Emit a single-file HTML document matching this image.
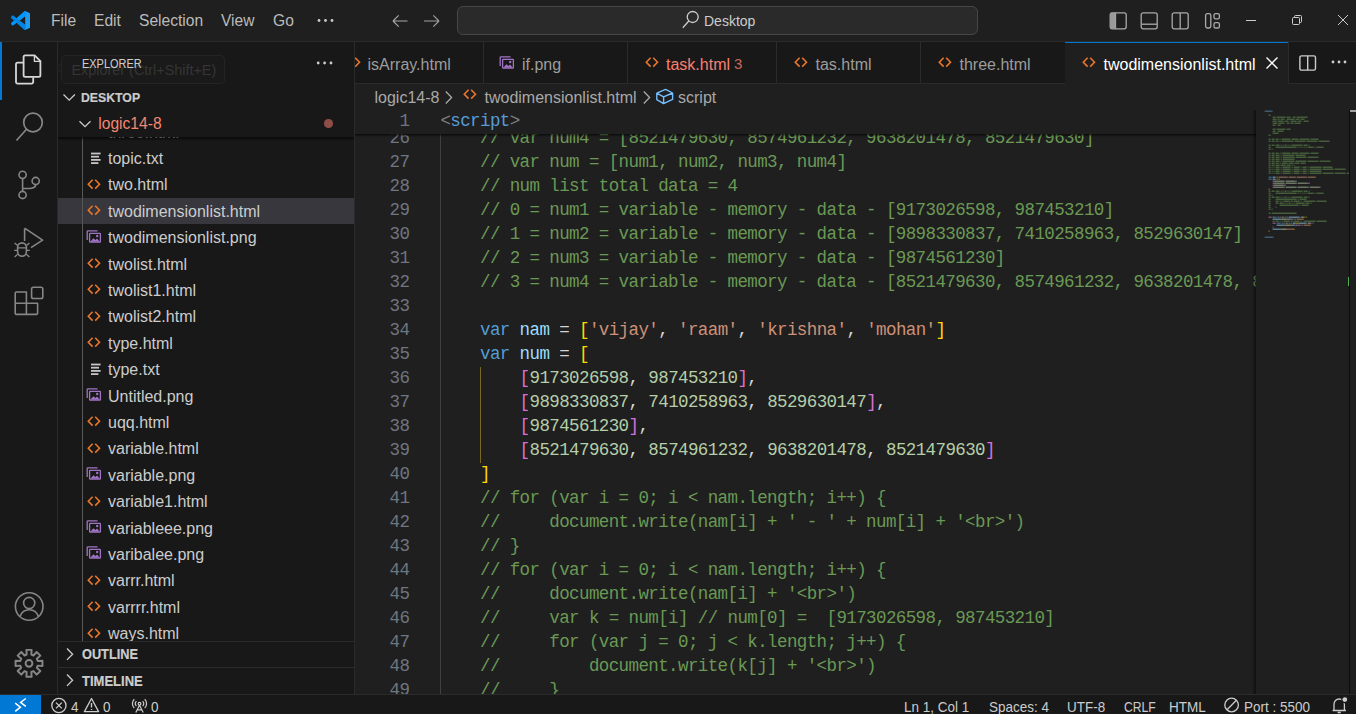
<!DOCTYPE html>
<html><head><meta charset="utf-8">
<style>
*{box-sizing:border-box}
html,body{margin:0;padding:0}
body{width:1356px;height:714px;overflow:hidden;position:relative;background:#1f1f1f;font-family:"Liberation Sans",sans-serif;color:#cccccc}
.a{position:absolute}
.t{position:absolute;white-space:pre;line-height:1}
svg{position:absolute;overflow:visible}
/* code */
.ln{position:absolute;left:0;width:54.4px;text-align:right;font-family:"Liberation Mono",monospace;font-size:17.5px;letter-spacing:-0.6016px;line-height:24px;margin-top:-0.6px;color:#6e7681;white-space:pre}
.cl{position:absolute;left:85.4px;margin-top:-0.6px;font-family:"Liberation Mono",monospace;font-size:17.5px;letter-spacing:-0.6016px;line-height:24px;color:#d4d4d4;white-space:pre}
.c{color:#6a9955}.k{color:#569cd6}.v{color:#9cdcfe}.s{color:#ce9178}.n{color:#b5cea8}.g{color:#ffd700}.o{color:#da70d6}.p{color:#808080}
.fi{position:absolute;left:108px;font-size:16px;line-height:1;white-space:pre;color:#cccccc}
</style></head>
<body>
<!-- title bar -->
<div class="a" style="left:0;top:0;width:1356px;height:41px;background:#1f1f1f"></div>
<div class="a" style="left:0;top:41px;width:1356px;height:1px;background:#2b2b2b"></div>
<!-- title content -->
<svg style="left:11px;top:11px" width="19" height="19" viewBox="0 0 100 100"><path fill="#0065a9" d="M96.46 10.8L75.86.87C73.47-.28 70.62.2 68.75 2.08L29.35 38.04 12.19 25.01c-1.6-1.21-3.83-1.11-5.32.24L1.36 30.26c-1.82 1.65-1.82 4.51 0 6.16L16.25 50 1.36 63.58c-1.82 1.65-1.82 4.51 0 6.16l5.51 5.01c1.49 1.35 3.72 1.45 5.32.24l17.16-13.03 39.4 35.96c1.87 1.87 4.72 2.36 7.11 1.21l20.6-9.91c2.16-1.04 3.54-3.23 3.54-5.63V16.41c0-2.4-1.38-4.59-3.54-5.63zM75.02 72.7L45.11 50l29.91-22.7v45.4z"/><path fill="#007acc" d="M96.46 10.8L75.86.87C73.47-.28 70.62.2 68.75 2.08L29.35 38.04 12.19 25.01c-1.6-1.21-3.83-1.11-5.32.24L1.36 30.26c-1.82 1.65-1.82 4.51 0 6.16L16.25 50 1.36 63.58c-1.82 1.65-1.82 4.51 0 6.16l5.51 5.01c1.49 1.35 3.72 1.45 5.32.24l17.16-13.03 39.4 35.96L75.02 72.7 45.11 50l29.91-22.7V0" opacity="0"/><path fill="#1f9cf0" d="M68.75 2.08c1.87-1.87 4.72-2.36 7.11-1.21l20.6 9.91c2.16 1.04 3.54 3.23 3.54 5.63v67.18c0 2.4-1.38 4.59-3.54 5.63l-20.6 9.91c-2.39 1.15-5.24.66-7.11-1.21 2.31 2.31 6.27.67 6.27-2.59V4.67c0-3.26-3.96-4.9-6.27-2.59z"/><path fill="#0098ff" d="M12.19 74.99c-1.6 1.21-3.83 1.11-5.32-.24l-5.51-5.01c-1.82-1.65-1.82-4.51 0-6.16L68.75 2.08c2.31-2.31 6.27-.67 6.27 2.59v22.63L12.19 74.99z"/><path fill="#0087e6" d="M12.19 25.01c-1.6-1.21-3.83-1.11-5.32.24l-5.51 5.01c-1.82 1.65-1.82 4.51 0 6.16l67.39 61.5c2.31 2.31 6.27.67 6.27-2.59V72.7L12.19 25.01z"/></svg>
<div class="t" style="left:51px;top:13.1px;font-size:15.6px;color:#bbbbbb">File</div>
<div class="t" style="left:94px;top:13.1px;font-size:15.6px;color:#bbbbbb">Edit</div>
<div class="t" style="left:139px;top:13.1px;font-size:15.6px;color:#bbbbbb">Selection</div>
<div class="t" style="left:221px;top:13.1px;font-size:15.6px;color:#bbbbbb">View</div>
<div class="t" style="left:273px;top:13.1px;font-size:15.6px;color:#bbbbbb">Go</div>
<svg style="left:316px;top:18px" width="20" height="6"><circle cx="3" cy="2.5" r="1.4" fill="#cccccc"/><circle cx="9.5" cy="2.5" r="1.4" fill="#cccccc"/><circle cx="16" cy="2.5" r="1.4" fill="#cccccc"/></svg>
<svg style="left:390px;top:12px" width="20" height="18" fill="none" stroke="#a8a8a8" stroke-width="1.15"><path d="M3 9H17.5M3 9L8.7 3.3M3 9L8.7 14.7"/></svg>
<svg style="left:422px;top:12px" width="20" height="18" fill="none" stroke="#a0a0a0" stroke-width="1.15"><path d="M2 9H17M17 9L11.3 3.3M17 9L11.3 14.7"/></svg>
<div class="a" style="left:457px;top:6px;width:521px;height:29px;border:1px solid #474747;border-radius:6px;background:#2a2a2a"></div>
<svg style="left:681px;top:10px" width="20" height="20" fill="none" stroke="#cccccc" stroke-width="1.3"><circle cx="11.7" cy="7" r="5.5"/><path d="M7.8 11L1.8 17.8"/></svg>
<div class="t" style="left:704px;top:14.2px;font-size:14px;color:#cccccc">Desktop</div>
<svg style="left:1109px;top:12px" width="19" height="18" fill="none" stroke="#aaaaaa" stroke-width="1.3"><rect x="1.2" y="0.8" width="16" height="16" rx="2"/><path d="M6.5 1V17"/><rect x="1.2" y="0.8" width="5.3" height="16" fill="#9a9a9a" stroke="none"/></svg>
<svg style="left:1140px;top:12px" width="19" height="18" fill="none" stroke="#aaaaaa" stroke-width="1.3"><rect x="1.2" y="0.8" width="16" height="16" rx="2"/><path d="M1.5 12.2H17"/></svg>
<svg style="left:1171px;top:12px" width="19" height="18" fill="none" stroke="#aaaaaa" stroke-width="1.3"><rect x="1.2" y="0.8" width="16" height="16" rx="2"/><path d="M9.2 1V17"/></svg>
<svg style="left:1203px;top:12px" width="19" height="18" fill="none" stroke="#aaaaaa" stroke-width="1.3"><rect x="2.6" y="1.6" width="5.2" height="14.4" rx="1.8"/><rect x="11" y="1.6" width="5.4" height="5.2" rx="1.6"/><rect x="11" y="10.6" width="5.4" height="5.4" rx="1.6"/></svg>
<svg style="left:1245px;top:19px" width="12" height="3"><path d="M1 1.5H11" stroke="#cccccc" stroke-width="1"/></svg>
<svg style="left:1291px;top:14px" width="12" height="12" fill="none" stroke="#cccccc" stroke-width="1"><rect x="1.5" y="3.5" width="7" height="7" rx="1"/><path d="M3.5 3.5V2.5a1 1 0 0 1 1-1h5a1 1 0 0 1 1 1v5a1 1 0 0 1-1 1H8.5"/></svg>
<svg style="left:1337px;top:14px" width="12" height="12" fill="none" stroke="#cccccc" stroke-width="1"><path d="M1 1L11 11M11 1L1 11"/></svg>
<!-- activity bar -->
<div class="a" style="left:0;top:42px;width:57px;height:652px;background:#181818"></div>
<div class="a" style="left:57px;top:42px;width:1px;height:652px;background:#2b2b2b"></div>
<!-- activity icons -->
<div class="a" style="left:0;top:42px;width:2px;height:58px;background:#0078d4"></div>
<svg style="left:0;top:42px" width="57" height="58" fill="none" stroke="#d7d7d7" stroke-width="1.8" stroke-linejoin="round"><path d="M23.2 20.6H17.6a1.6 1.6 0 0 0-1.6 1.6V40a1.6 1.6 0 0 0 1.6 1.6H31.6a1.6 1.6 0 0 0 1.6-1.6V35.4"/><path d="M23.6 15a1.6 1.6 0 0 1 1.6-1.6H34.6L40.4 19.2V33.2a1.6 1.6 0 0 1-1.6 1.6H25.2a1.6 1.6 0 0 1-1.6-1.6Z"/><path d="M34.4 13.8V19.4H40" stroke-width="1.3"/></svg>
<svg style="left:0;top:100px" width="57" height="58" fill="none" stroke="#868686" stroke-width="1.7"><circle cx="33" cy="22.5" r="9.3"/><path d="M26.3 29.5L16.5 40.5"/></svg>
<svg style="left:0;top:157px" width="57" height="58" fill="none" stroke="#868686" stroke-width="1.6"><circle cx="22.6" cy="17.8" r="3.6"/><circle cx="22.6" cy="38" r="3.6"/><circle cx="35.7" cy="24" r="3.6"/><path d="M22.6 21.4V34.4M35.7 27.6C35.7 31 33 31.5 29 31.5H22.6"/></svg>
<svg style="left:0;top:214px" width="57" height="58" fill="none" stroke="#868686" stroke-width="1.6" stroke-linejoin="round"><path d="M24.6 14.6V27M24.6 14.2L42.6 26.2 31 33.6"/><rect x="17.6" y="28.9" width="8.8" height="13.3" rx="4.4"/><path d="M17.8 33.8H26.2M17.6 31.6L14.6 28.9M17.6 36.4H14.2M17.6 40.3L14.6 43M26.4 31.6L29.4 28.9M26.4 36.4H29.8M26.4 40.3L29.4 43" stroke-width="1.3"/></svg>
<svg style="left:0;top:271px" width="57" height="58" fill="none" stroke="#868686" stroke-width="1.6" stroke-linejoin="round"><path d="M15.2 32.2H26.4V43.4H16.4a1.2 1.2 0 0 1-1.2-1.2ZM15.2 32.2V22.2a1.2 1.2 0 0 1 1.2-1.2H26.4V32.2M26.4 32.2H37.6V42.2a1.2 1.2 0 0 1-1.2 1.2H26.4"/><rect x="31.6" y="16.3" width="11.2" height="11.2" rx="1.8"/></svg>
<svg style="left:0;top:578px" width="57" height="58" fill="none" stroke="#868686" stroke-width="1.6"><circle cx="29.2" cy="28.5" r="13.8"/><circle cx="29.2" cy="25" r="5.6"/><path d="M20 38.6C21.5 34.2 25 31.8 29.2 31.8S36.9 34.2 38.4 38.6"/></svg>
<svg style="left:0;top:635px" width="57" height="58" fill="none" stroke="#868686" stroke-width="1.95" stroke-linejoin="round"><path d="M26.67 19.61 L26.39 14.85 L31.61 14.85 L31.33 19.61 L33.50 20.51 L36.66 16.94 L40.36 20.64 L36.79 23.80 L37.69 25.97 L42.45 25.69 L42.45 30.91 L37.69 30.63 L36.79 32.80 L40.36 35.96 L36.66 39.66 L33.50 36.09 L31.33 36.99 L31.61 41.75 L26.39 41.75 L26.67 36.99 L24.50 36.09 L21.34 39.66 L17.64 35.96 L21.21 32.80 L20.31 30.63 L15.55 30.91 L15.55 25.69 L20.31 25.97 L21.21 23.80 L17.64 20.64 L21.34 16.94 L24.50 20.51Z"/><circle cx="29.0" cy="28.3" r="3.4"/></svg>
<!-- sidebar -->
<div class="a" style="left:58px;top:42px;width:296px;height:652px;background:#181818"></div>
<div class="a" style="left:354px;top:42px;width:1px;height:652px;background:#2b2b2b"></div>
<!-- sidebar content -->
<div class="a" style="left:58px;top:84px;width:296px;height:610px;overflow:hidden">
<div style="position:absolute;left:-58px;top:-84px;width:1356px;height:714px">
<div class="fi" style="top:124.6px">three.html</div>
<svg style="left:90px;top:151.6px" width="12" height="13" fill="#c5c5c5"><rect x="1" y="0.6" width="9.6" height="1.8"/><rect x="1" y="3.8" width="8" height="1.8"/><rect x="1" y="7" width="9.6" height="1.8"/><rect x="1" y="10.2" width="7.4" height="1.8"/></svg>
<div class="fi" style="top:151.0px">topic.txt</div>
<svg style="left:87px;top:178.7px" width="14" height="11" fill="none" stroke="#e8762c" stroke-width="1.6"><path d="M5.6 0.8L1.3 5.2 5.6 9.6M8.2 0.8L12.5 5.2 8.2 9.6"/></svg>
<div class="fi" style="top:177.4px">two.html</div>
<div class="a" style="left:58px;top:198.2px;width:296px;height:26.2px;background:#37373d"></div>
<svg style="left:87px;top:205.1px" width="14" height="11" fill="none" stroke="#e8762c" stroke-width="1.6"><path d="M5.6 0.8L1.3 5.2 5.6 9.6M8.2 0.8L12.5 5.2 8.2 9.6"/></svg>
<div class="fi" style="top:203.8px">twodimensionlist.html</div>
<svg style="left:86px;top:229.6px" width="16" height="14" fill="none"><path d="M1.2 10V1.6a0.8 0.8 0 0 1 0.8-0.8H11.5" stroke="#a074c4" stroke-width="1.3"/><rect x="3.6" y="3.4" width="10.8" height="8.8" rx="0.6" stroke="#a074c4" stroke-width="1.3"/><path d="M4.2 11.8L7.5 8.3 9.4 10 11 8.6 13.8 11.8Z" fill="#a074c4"/><circle cx="11.2" cy="6" r="1.2" fill="#a074c4"/></svg>
<div class="fi" style="top:230.2px">twodimensionlist.png</div>
<svg style="left:87px;top:257.9px" width="14" height="11" fill="none" stroke="#e8762c" stroke-width="1.6"><path d="M5.6 0.8L1.3 5.2 5.6 9.6M8.2 0.8L12.5 5.2 8.2 9.6"/></svg>
<div class="fi" style="top:256.6px">twolist.html</div>
<svg style="left:87px;top:284.3px" width="14" height="11" fill="none" stroke="#e8762c" stroke-width="1.6"><path d="M5.6 0.8L1.3 5.2 5.6 9.6M8.2 0.8L12.5 5.2 8.2 9.6"/></svg>
<div class="fi" style="top:283.0px">twolist1.html</div>
<svg style="left:87px;top:310.7px" width="14" height="11" fill="none" stroke="#e8762c" stroke-width="1.6"><path d="M5.6 0.8L1.3 5.2 5.6 9.6M8.2 0.8L12.5 5.2 8.2 9.6"/></svg>
<div class="fi" style="top:309.4px">twolist2.html</div>
<svg style="left:87px;top:337.1px" width="14" height="11" fill="none" stroke="#e8762c" stroke-width="1.6"><path d="M5.6 0.8L1.3 5.2 5.6 9.6M8.2 0.8L12.5 5.2 8.2 9.6"/></svg>
<div class="fi" style="top:335.8px">type.html</div>
<svg style="left:90px;top:362.8px" width="12" height="13" fill="#c5c5c5"><rect x="1" y="0.6" width="9.6" height="1.8"/><rect x="1" y="3.8" width="8" height="1.8"/><rect x="1" y="7" width="9.6" height="1.8"/><rect x="1" y="10.2" width="7.4" height="1.8"/></svg>
<div class="fi" style="top:362.2px">type.txt</div>
<svg style="left:86px;top:388.0px" width="16" height="14" fill="none"><path d="M1.2 10V1.6a0.8 0.8 0 0 1 0.8-0.8H11.5" stroke="#a074c4" stroke-width="1.3"/><rect x="3.6" y="3.4" width="10.8" height="8.8" rx="0.6" stroke="#a074c4" stroke-width="1.3"/><path d="M4.2 11.8L7.5 8.3 9.4 10 11 8.6 13.8 11.8Z" fill="#a074c4"/><circle cx="11.2" cy="6" r="1.2" fill="#a074c4"/></svg>
<div class="fi" style="top:388.6px">Untitled.png</div>
<svg style="left:87px;top:416.3px" width="14" height="11" fill="none" stroke="#e8762c" stroke-width="1.6"><path d="M5.6 0.8L1.3 5.2 5.6 9.6M8.2 0.8L12.5 5.2 8.2 9.6"/></svg>
<div class="fi" style="top:415.0px">uqq.html</div>
<svg style="left:87px;top:442.7px" width="14" height="11" fill="none" stroke="#e8762c" stroke-width="1.6"><path d="M5.6 0.8L1.3 5.2 5.6 9.6M8.2 0.8L12.5 5.2 8.2 9.6"/></svg>
<div class="fi" style="top:441.4px">variable.html</div>
<svg style="left:86px;top:467.2px" width="16" height="14" fill="none"><path d="M1.2 10V1.6a0.8 0.8 0 0 1 0.8-0.8H11.5" stroke="#a074c4" stroke-width="1.3"/><rect x="3.6" y="3.4" width="10.8" height="8.8" rx="0.6" stroke="#a074c4" stroke-width="1.3"/><path d="M4.2 11.8L7.5 8.3 9.4 10 11 8.6 13.8 11.8Z" fill="#a074c4"/><circle cx="11.2" cy="6" r="1.2" fill="#a074c4"/></svg>
<div class="fi" style="top:467.8px">variable.png</div>
<svg style="left:87px;top:495.5px" width="14" height="11" fill="none" stroke="#e8762c" stroke-width="1.6"><path d="M5.6 0.8L1.3 5.2 5.6 9.6M8.2 0.8L12.5 5.2 8.2 9.6"/></svg>
<div class="fi" style="top:494.2px">variable1.html</div>
<svg style="left:86px;top:520.0px" width="16" height="14" fill="none"><path d="M1.2 10V1.6a0.8 0.8 0 0 1 0.8-0.8H11.5" stroke="#a074c4" stroke-width="1.3"/><rect x="3.6" y="3.4" width="10.8" height="8.8" rx="0.6" stroke="#a074c4" stroke-width="1.3"/><path d="M4.2 11.8L7.5 8.3 9.4 10 11 8.6 13.8 11.8Z" fill="#a074c4"/><circle cx="11.2" cy="6" r="1.2" fill="#a074c4"/></svg>
<div class="fi" style="top:520.6px">variableee.png</div>
<svg style="left:86px;top:546.4px" width="16" height="14" fill="none"><path d="M1.2 10V1.6a0.8 0.8 0 0 1 0.8-0.8H11.5" stroke="#a074c4" stroke-width="1.3"/><rect x="3.6" y="3.4" width="10.8" height="8.8" rx="0.6" stroke="#a074c4" stroke-width="1.3"/><path d="M4.2 11.8L7.5 8.3 9.4 10 11 8.6 13.8 11.8Z" fill="#a074c4"/><circle cx="11.2" cy="6" r="1.2" fill="#a074c4"/></svg>
<div class="fi" style="top:547.0px">varibalee.png</div>
<svg style="left:87px;top:574.7px" width="14" height="11" fill="none" stroke="#e8762c" stroke-width="1.6"><path d="M5.6 0.8L1.3 5.2 5.6 9.6M8.2 0.8L12.5 5.2 8.2 9.6"/></svg>
<div class="fi" style="top:573.4px">varrr.html</div>
<svg style="left:87px;top:601.1px" width="14" height="11" fill="none" stroke="#e8762c" stroke-width="1.6"><path d="M5.6 0.8L1.3 5.2 5.6 9.6M8.2 0.8L12.5 5.2 8.2 9.6"/></svg>
<div class="fi" style="top:599.8px">varrrr.html</div>
<svg style="left:87px;top:627.5px" width="14" height="11" fill="none" stroke="#e8762c" stroke-width="1.6"><path d="M5.6 0.8L1.3 5.2 5.6 9.6M8.2 0.8L12.5 5.2 8.2 9.6"/></svg>
<div class="fi" style="top:626.2px">ways.html</div>

<div class="a" style="left:82px;top:136px;width:1px;height:510px;background:#585858"></div>
<div class="a" style="left:58px;top:110.4px;width:296px;height:26.4px;background:#181818"></div>
<svg style="left:78px;top:119px" width="14" height="10" fill="none" stroke="#cccccc" stroke-width="1.3"><path d="M1.5 2.2L7 7.6 12.5 2.2"/></svg>
<div class="t" style="left:98.3px;top:116.1px;font-size:15.6px;color:#f48771">logic14-8</div>
<div class="a" style="left:324px;top:119px;width:8.5px;height:8.5px;border-radius:50%;background:#8f4d47"></div>
<div class="a" style="left:58px;top:136.8px;width:296px;height:4px;background:linear-gradient(#000000a0,#00000000)"></div>
</div></div>
<div class="t" style="left:81.5px;top:57.4px;font-size:13.2px;color:#cccccc;transform:scaleX(0.83);transform-origin:0 0">EXPLORER</div>
<svg style="left:315px;top:60px" width="22" height="6"><circle cx="3.2" cy="3" r="1.4" fill="#cccccc"/><circle cx="9.6" cy="3" r="1.4" fill="#cccccc"/><circle cx="16" cy="3" r="1.4" fill="#cccccc"/></svg>
<svg style="left:62px;top:92px" width="15" height="11" fill="none" stroke="#cccccc" stroke-width="1.3"><path d="M1.5 2.5L7.2 8.2 12.9 2.5"/></svg>
<div class="t" style="left:81.3px;top:91.2px;font-size:13.2px;font-weight:bold;color:#cccccc;transform:scaleX(0.93);transform-origin:0 0;-webkit-text-stroke:0.2px #cccccc">DESKTOP</div>
<!-- tooltip -->
<div class="a" style="left:57.5px;top:64px;width:8px;height:8px;transform:rotate(45deg);border-left:1px solid #262626;border-bottom:1px solid #262626;background:#1b1b1b;opacity:0.9"></div>
<div class="a" style="left:61px;top:55px;width:164px;height:29px;border:1px solid #262626;border-radius:4px;background:#1b1b1b;opacity:0.9"></div>
<div class="t" style="left:71.5px;top:63px;font-size:14.4px;color:#353535">Explorer (Ctrl+Shift+E)</div>
<div class="t" style="left:81.5px;top:57.4px;font-size:13.2px;color:#cccccc;transform:scaleX(0.83);transform-origin:0 0">EXPLORER</div>
<!-- outline / timeline -->
<div class="a" style="left:58px;top:641px;width:296px;height:1px;background:#2b2b2b"></div>
<div class="a" style="left:58px;top:642px;width:296px;height:25.4px;background:#181818"></div>
<div class="a" style="left:58px;top:667.4px;width:296px;height:1px;background:#2b2b2b"></div>
<div class="a" style="left:58px;top:668.4px;width:296px;height:25.6px;background:#181818"></div>
<svg style="left:64px;top:647px" width="12" height="15" fill="none" stroke="#cccccc" stroke-width="1.3"><path d="M3 1.5L8.6 7.2 3 12.9"/></svg>
<div class="t" style="left:81.5px;top:647.2px;font-size:14px;font-weight:bold;color:#cccccc;transform:scaleX(0.91);transform-origin:0 0;-webkit-text-stroke:0.2px #cccccc">OUTLINE</div>
<svg style="left:64px;top:673px" width="12" height="15" fill="none" stroke="#cccccc" stroke-width="1.3"><path d="M3 1.5L8.6 7.2 3 12.9"/></svg>
<div class="t" style="left:81.5px;top:674.3px;font-size:14px;font-weight:bold;color:#cccccc;transform:scaleX(0.93);transform-origin:0 0;-webkit-text-stroke:0.2px #cccccc">TIMELINE</div>
<!-- tab bar -->
<div class="a" style="left:355px;top:42px;width:1001px;height:41px;background:#181818"></div>
<div class="a" style="left:355px;top:83px;width:1001px;height:1px;background:#2b2b2b"></div>
<!-- editor -->
<div class="a" id="ed" style="left:355px;top:110px;width:901px;height:584px;overflow:hidden;background:#1f1f1f">
<div class="a" style="left:85px;top:0;width:1px;height:584px;background:#404040"></div>
<div class="a" style="left:125px;top:257px;width:1px;height:96px;background:#7a6620"></div>
<div class=ln style="top:17px">26</div><div class=cl style="top:17px">    <span class=c>// var num4 = [8521479630, 8574961232, 9638201478, 8521479630]</span></div>
<div class=ln style="top:41px">27</div><div class=cl style="top:41px">    <span class=c>// var num = [num1, num2, num3, num4]</span></div>
<div class=ln style="top:65px">28</div><div class=cl style="top:65px">    <span class=c>// num list total data = 4</span></div>
<div class=ln style="top:89px">29</div><div class=cl style="top:89px">    <span class=c>// 0 = num1 = variable - memory - data - [9173026598, 987453210]</span></div>
<div class=ln style="top:113px">30</div><div class=cl style="top:113px">    <span class=c>// 1 = num2 = variable - memory - data - [9898330837, 7410258963, 8529630147]</span></div>
<div class=ln style="top:137px">31</div><div class=cl style="top:137px">    <span class=c>// 2 = num3 = variable - memory - data - [9874561230]</span></div>
<div class=ln style="top:161px">32</div><div class=cl style="top:161px">    <span class=c>// 3 = num4 = variable - memory - data - [8521479630, 8574961232, 9638201478, 8521479630]</span></div>
<div class=ln style="top:185px">33</div><div class=cl style="top:185px"></div>
<div class=ln style="top:209px">34</div><div class=cl style="top:209px">    <span class=k>var</span> <span class=v>nam</span> = <span class=g>[</span><span class=s>'vijay'</span>, <span class=s>'raam'</span>, <span class=s>'krishna'</span>, <span class=s>'mohan'</span><span class=g>]</span></div>
<div class=ln style="top:233px">35</div><div class=cl style="top:233px">    <span class=k>var</span> <span class=v>num</span> = <span class=g>[</span></div>
<div class=ln style="top:257px">36</div><div class=cl style="top:257px">        <span class=o>[</span><span class=n>9173026598</span>, <span class=n>987453210</span><span class=o>]</span>,</div>
<div class=ln style="top:281px">37</div><div class=cl style="top:281px">        <span class=o>[</span><span class=n>9898330837</span>, <span class=n>7410258963</span>, <span class=n>8529630147</span><span class=o>]</span>,</div>
<div class=ln style="top:305px">38</div><div class=cl style="top:305px">        <span class=o>[</span><span class=n>9874561230</span><span class=o>]</span>,</div>
<div class=ln style="top:329px">39</div><div class=cl style="top:329px">        <span class=o>[</span><span class=n>8521479630</span>, <span class=n>8574961232</span>, <span class=n>9638201478</span>, <span class=n>8521479630</span><span class=o>]</span></div>
<div class=ln style="top:353px">40</div><div class=cl style="top:353px">    <span class=g>]</span></div>
<div class=ln style="top:377px">41</div><div class=cl style="top:377px">    <span class=c>// for (var i = 0; i &lt; nam.length; i++) {</span></div>
<div class=ln style="top:401px">42</div><div class=cl style="top:401px">    <span class=c>//     document.write(nam[i] + &#x27; - &#x27; + num[i] + &#x27;&lt;br&gt;&#x27;)</span></div>
<div class=ln style="top:425px">43</div><div class=cl style="top:425px">    <span class=c>// }</span></div>
<div class=ln style="top:449px">44</div><div class=cl style="top:449px">    <span class=c>// for (var i = 0; i &lt; nam.length; i++) {</span></div>
<div class=ln style="top:473px">45</div><div class=cl style="top:473px">    <span class=c>//     document.write(nam[i] + &#x27;&lt;br&gt;&#x27;)</span></div>
<div class=ln style="top:497px">46</div><div class=cl style="top:497px">    <span class=c>//     var k = num[i] // num[0] =  [9173026598, 987453210]</span></div>
<div class=ln style="top:521px">47</div><div class=cl style="top:521px">    <span class=c>//     for (var j = 0; j &lt; k.length; j++) {</span></div>
<div class=ln style="top:545px">48</div><div class=cl style="top:545px">    <span class=c>//         document.write(k[j] + &#x27;&lt;br&gt;&#x27;)</span></div>
<div class=ln style="top:569px">49</div><div class=cl style="top:569px">    <span class=c>//     }</span></div>

<!-- sticky -->
<div class="a" style="left:0;top:0;width:901px;height:24px;background:#1f1f1f"></div>
<div class="ln" style="top:0">1</div><div class="cl" style="top:0"><span class=p>&lt;</span><span class=k>script</span><span class=p>&gt;</span></div>
<div class="a" style="left:0;top:24px;width:901px;height:3px;background:linear-gradient(#000000aa,#00000000)"></div>
</div>
<!-- minimap -->
<div class="a" style="left:1256px;top:110px;width:100px;height:584px;background:#1f1f1f"></div>
<div class="a" style="left:1252px;top:110px;width:4px;height:584px;background:linear-gradient(90deg,#00000000,#00000080)"></div>
<svg style="left:0;top:0" width="1356" height="714"><path fill="#808080" fill-opacity="0.5" d="M1264.6 110.4h1.0v1.5h-1.0zM1271.6 110.4h1.0v1.5h-1.0zM1264.6 236.4h1.0v1.5h-1.0zM1272.6 236.4h1.0v1.5h-1.0z"/><path fill="#569cd6" fill-opacity="0.5" d="M1265.6 110.4h6.0v1.5h-6.0zM1268.6 176.4h3.0v1.5h-3.0zM1268.6 178.4h3.0v1.5h-3.0zM1273.6 216.4h3.0v1.5h-3.0zM1277.6 222.4h3.0v1.5h-3.0zM1265.6 236.4h7.0v1.5h-7.0z"/><path fill="#6a9955" fill-opacity="0.5" d="M1268.6 114.4h2.0v1.5h-2.0zM1272.6 116.4h3.0v1.5h-3.0zM1276.6 116.4h9.0v1.5h-9.0zM1286.6 116.4h4.0v1.5h-4.0zM1292.6 116.4h3.0v1.5h-3.0zM1296.6 116.4h11.0v1.5h-11.0zM1272.6 118.4h4.0v1.5h-4.0zM1277.6 118.4h2.0v1.5h-2.0zM1280.6 118.4h4.0v1.5h-4.0zM1286.6 118.4h8.0v1.5h-8.0zM1295.6 118.4h4.0v1.5h-4.0zM1300.6 118.4h4.0v1.5h-4.0zM1272.6 120.4h4.0v1.5h-4.0zM1277.6 120.4h6.0v1.5h-6.0zM1284.6 120.4h4.0v1.5h-4.0zM1290.6 120.4h6.0v1.5h-6.0zM1297.6 120.4h4.0v1.5h-4.0zM1303.6 120.4h5.0v1.5h-5.0zM1272.6 122.4h5.0v1.5h-5.0zM1278.6 122.4h6.0v1.5h-6.0zM1286.6 122.4h3.0v1.5h-3.0zM1290.6 122.4h3.0v1.5h-3.0zM1294.6 122.4h6.0v1.5h-6.0zM1272.6 124.4h3.0v1.5h-3.0zM1277.6 124.4h3.0v1.5h-3.0zM1272.6 128.4h3.0v1.5h-3.0zM1276.6 128.4h9.0v1.5h-9.0zM1286.6 128.4h4.0v1.5h-4.0zM1272.6 130.4h3.0v1.5h-3.0zM1277.6 130.4h6.0v1.5h-6.0zM1272.6 132.4h6.0v1.5h-6.0zM1268.6 134.4h2.0v1.5h-2.0zM1268.6 138.4h2.0v1.5h-2.0zM1271.6 138.4h3.0v1.5h-3.0zM1275.6 138.4h3.0v1.5h-3.0zM1279.6 138.4h1.0v1.5h-1.0zM1281.6 138.4h9.0v1.5h-9.0zM1291.6 138.4h7.0v1.5h-7.0zM1299.6 138.4h10.0v1.5h-10.0zM1310.6 138.4h8.0v1.5h-8.0zM1268.6 140.4h2.0v1.5h-2.0zM1271.6 140.4h3.0v1.5h-3.0zM1275.6 140.4h3.0v1.5h-3.0zM1279.6 140.4h1.0v1.5h-1.0zM1281.6 140.4h12.0v1.5h-12.0zM1294.6 140.4h11.0v1.5h-11.0zM1306.6 140.4h11.0v1.5h-11.0zM1318.6 140.4h11.0v1.5h-11.0zM1268.6 144.4h2.0v1.5h-2.0zM1271.6 144.4h3.0v1.5h-3.0zM1275.6 144.4h4.0v1.5h-4.0zM1280.6 144.4h1.0v1.5h-1.0zM1282.6 144.4h1.0v1.5h-1.0zM1284.6 144.4h2.0v1.5h-2.0zM1287.6 144.4h1.0v1.5h-1.0zM1289.6 144.4h1.0v1.5h-1.0zM1291.6 144.4h11.0v1.5h-11.0zM1303.6 144.4h4.0v1.5h-4.0zM1308.6 144.4h1.0v1.5h-1.0zM1268.6 146.4h2.0v1.5h-2.0zM1275.6 146.4h21.0v1.5h-21.0zM1297.6 146.4h1.0v1.5h-1.0zM1299.6 146.4h1.0v1.5h-1.0zM1301.6 146.4h1.0v1.5h-1.0zM1303.6 146.4h1.0v1.5h-1.0zM1305.6 146.4h1.0v1.5h-1.0zM1307.6 146.4h6.0v1.5h-6.0zM1314.6 146.4h1.0v1.5h-1.0zM1316.6 146.4h7.0v1.5h-7.0zM1268.6 148.4h2.0v1.5h-2.0zM1271.6 148.4h1.0v1.5h-1.0zM1268.6 152.4h2.0v1.5h-2.0zM1271.6 152.4h3.0v1.5h-3.0zM1275.6 152.4h3.0v1.5h-3.0zM1279.6 152.4h1.0v1.5h-1.0zM1281.6 152.4h9.0v1.5h-9.0zM1291.6 152.4h7.0v1.5h-7.0zM1299.6 152.4h10.0v1.5h-10.0zM1310.6 152.4h8.0v1.5h-8.0zM1268.6 154.4h2.0v1.5h-2.0zM1271.6 154.4h3.0v1.5h-3.0zM1275.6 154.4h4.0v1.5h-4.0zM1280.6 154.4h1.0v1.5h-1.0zM1282.6 154.4h12.0v1.5h-12.0zM1295.6 154.4h10.0v1.5h-10.0zM1268.6 156.4h2.0v1.5h-2.0zM1271.6 156.4h3.0v1.5h-3.0zM1275.6 156.4h4.0v1.5h-4.0zM1280.6 156.4h1.0v1.5h-1.0zM1282.6 156.4h12.0v1.5h-12.0zM1295.6 156.4h11.0v1.5h-11.0zM1307.6 156.4h11.0v1.5h-11.0zM1268.6 158.4h2.0v1.5h-2.0zM1271.6 158.4h3.0v1.5h-3.0zM1275.6 158.4h4.0v1.5h-4.0zM1280.6 158.4h1.0v1.5h-1.0zM1282.6 158.4h12.0v1.5h-12.0zM1268.6 160.4h2.0v1.5h-2.0zM1271.6 160.4h3.0v1.5h-3.0zM1275.6 160.4h4.0v1.5h-4.0zM1280.6 160.4h1.0v1.5h-1.0zM1282.6 160.4h12.0v1.5h-12.0zM1295.6 160.4h11.0v1.5h-11.0zM1307.6 160.4h11.0v1.5h-11.0zM1319.6 160.4h11.0v1.5h-11.0zM1268.6 162.4h2.0v1.5h-2.0zM1271.6 162.4h3.0v1.5h-3.0zM1275.6 162.4h3.0v1.5h-3.0zM1279.6 162.4h1.0v1.5h-1.0zM1281.6 162.4h6.0v1.5h-6.0zM1288.6 162.4h5.0v1.5h-5.0zM1294.6 162.4h5.0v1.5h-5.0zM1300.6 162.4h5.0v1.5h-5.0zM1268.6 164.4h2.0v1.5h-2.0zM1271.6 164.4h3.0v1.5h-3.0zM1275.6 164.4h4.0v1.5h-4.0zM1280.6 164.4h5.0v1.5h-5.0zM1286.6 164.4h4.0v1.5h-4.0zM1291.6 164.4h1.0v1.5h-1.0zM1293.6 164.4h1.0v1.5h-1.0zM1268.6 166.4h2.0v1.5h-2.0zM1271.6 166.4h1.0v1.5h-1.0zM1273.6 166.4h1.0v1.5h-1.0zM1275.6 166.4h4.0v1.5h-4.0zM1280.6 166.4h1.0v1.5h-1.0zM1282.6 166.4h8.0v1.5h-8.0zM1291.6 166.4h1.0v1.5h-1.0zM1293.6 166.4h6.0v1.5h-6.0zM1300.6 166.4h1.0v1.5h-1.0zM1302.6 166.4h4.0v1.5h-4.0zM1307.6 166.4h1.0v1.5h-1.0zM1309.6 166.4h12.0v1.5h-12.0zM1322.6 166.4h10.0v1.5h-10.0zM1268.6 168.4h2.0v1.5h-2.0zM1271.6 168.4h1.0v1.5h-1.0zM1273.6 168.4h1.0v1.5h-1.0zM1275.6 168.4h4.0v1.5h-4.0zM1280.6 168.4h1.0v1.5h-1.0zM1282.6 168.4h8.0v1.5h-8.0zM1291.6 168.4h1.0v1.5h-1.0zM1293.6 168.4h6.0v1.5h-6.0zM1300.6 168.4h1.0v1.5h-1.0zM1302.6 168.4h4.0v1.5h-4.0zM1307.6 168.4h1.0v1.5h-1.0zM1309.6 168.4h12.0v1.5h-12.0zM1322.6 168.4h11.0v1.5h-11.0zM1334.6 168.4h11.0v1.5h-11.0zM1268.6 170.4h2.0v1.5h-2.0zM1271.6 170.4h1.0v1.5h-1.0zM1273.6 170.4h1.0v1.5h-1.0zM1275.6 170.4h4.0v1.5h-4.0zM1280.6 170.4h1.0v1.5h-1.0zM1282.6 170.4h8.0v1.5h-8.0zM1291.6 170.4h1.0v1.5h-1.0zM1293.6 170.4h6.0v1.5h-6.0zM1300.6 170.4h1.0v1.5h-1.0zM1302.6 170.4h4.0v1.5h-4.0zM1307.6 170.4h1.0v1.5h-1.0zM1309.6 170.4h12.0v1.5h-12.0zM1268.6 172.4h2.0v1.5h-2.0zM1271.6 172.4h1.0v1.5h-1.0zM1273.6 172.4h1.0v1.5h-1.0zM1275.6 172.4h4.0v1.5h-4.0zM1280.6 172.4h1.0v1.5h-1.0zM1282.6 172.4h8.0v1.5h-8.0zM1291.6 172.4h1.0v1.5h-1.0zM1293.6 172.4h6.0v1.5h-6.0zM1300.6 172.4h1.0v1.5h-1.0zM1302.6 172.4h4.0v1.5h-4.0zM1307.6 172.4h1.0v1.5h-1.0zM1309.6 172.4h12.0v1.5h-12.0zM1322.6 172.4h11.0v1.5h-11.0zM1334.6 172.4h11.0v1.5h-11.0zM1346.6 172.4h2.4v1.5h-2.4zM1268.6 190.4h2.0v1.5h-2.0zM1271.6 190.4h3.0v1.5h-3.0zM1275.6 190.4h4.0v1.5h-4.0zM1280.6 190.4h1.0v1.5h-1.0zM1282.6 190.4h1.0v1.5h-1.0zM1284.6 190.4h2.0v1.5h-2.0zM1287.6 190.4h1.0v1.5h-1.0zM1289.6 190.4h1.0v1.5h-1.0zM1291.6 190.4h11.0v1.5h-11.0zM1303.6 190.4h4.0v1.5h-4.0zM1308.6 190.4h1.0v1.5h-1.0zM1268.6 192.4h2.0v1.5h-2.0zM1275.6 192.4h21.0v1.5h-21.0zM1297.6 192.4h1.0v1.5h-1.0zM1299.6 192.4h1.0v1.5h-1.0zM1301.6 192.4h1.0v1.5h-1.0zM1303.6 192.4h1.0v1.5h-1.0zM1305.6 192.4h1.0v1.5h-1.0zM1307.6 192.4h6.0v1.5h-6.0zM1314.6 192.4h1.0v1.5h-1.0zM1316.6 192.4h7.0v1.5h-7.0zM1268.6 194.4h2.0v1.5h-2.0zM1271.6 194.4h1.0v1.5h-1.0zM1268.6 196.4h2.0v1.5h-2.0zM1271.6 196.4h3.0v1.5h-3.0zM1275.6 196.4h4.0v1.5h-4.0zM1280.6 196.4h1.0v1.5h-1.0zM1282.6 196.4h1.0v1.5h-1.0zM1284.6 196.4h2.0v1.5h-2.0zM1287.6 196.4h1.0v1.5h-1.0zM1289.6 196.4h1.0v1.5h-1.0zM1291.6 196.4h11.0v1.5h-11.0zM1303.6 196.4h4.0v1.5h-4.0zM1308.6 196.4h1.0v1.5h-1.0zM1268.6 198.4h2.0v1.5h-2.0zM1275.6 198.4h21.0v1.5h-21.0zM1297.6 198.4h1.0v1.5h-1.0zM1299.6 198.4h7.0v1.5h-7.0zM1268.6 200.4h2.0v1.5h-2.0zM1275.6 200.4h3.0v1.5h-3.0zM1279.6 200.4h1.0v1.5h-1.0zM1281.6 200.4h1.0v1.5h-1.0zM1283.6 200.4h6.0v1.5h-6.0zM1290.6 200.4h2.0v1.5h-2.0zM1293.6 200.4h6.0v1.5h-6.0zM1300.6 200.4h1.0v1.5h-1.0zM1303.6 200.4h12.0v1.5h-12.0zM1316.6 200.4h10.0v1.5h-10.0zM1268.6 202.4h2.0v1.5h-2.0zM1275.6 202.4h3.0v1.5h-3.0zM1279.6 202.4h4.0v1.5h-4.0zM1284.6 202.4h1.0v1.5h-1.0zM1286.6 202.4h1.0v1.5h-1.0zM1288.6 202.4h2.0v1.5h-2.0zM1291.6 202.4h1.0v1.5h-1.0zM1293.6 202.4h1.0v1.5h-1.0zM1295.6 202.4h9.0v1.5h-9.0zM1305.6 202.4h4.0v1.5h-4.0zM1310.6 202.4h1.0v1.5h-1.0zM1268.6 204.4h2.0v1.5h-2.0zM1279.6 204.4h19.0v1.5h-19.0zM1299.6 204.4h1.0v1.5h-1.0zM1301.6 204.4h7.0v1.5h-7.0zM1268.6 206.4h2.0v1.5h-2.0zM1275.6 206.4h1.0v1.5h-1.0zM1268.6 208.4h2.0v1.5h-2.0zM1271.6 208.4h1.0v1.5h-1.0zM1268.6 212.4h2.0v1.5h-2.0zM1271.6 212.4h25.0v1.5h-25.0zM1272.6 220.4h2.0v1.5h-2.0zM1275.6 220.4h3.0v1.5h-3.0zM1279.6 220.4h1.0v1.5h-1.0zM1281.6 220.4h1.0v1.5h-1.0zM1283.6 220.4h6.0v1.5h-6.0zM1290.6 220.4h2.0v1.5h-2.0zM1293.6 220.4h6.0v1.5h-6.0zM1300.6 220.4h1.0v1.5h-1.0zM1303.6 220.4h12.0v1.5h-12.0zM1316.6 220.4h10.0v1.5h-10.0z"/><path fill="#9cdcfe" fill-opacity="0.5" d="M1272.6 176.4h3.0v1.5h-3.0zM1272.6 178.4h3.0v1.5h-3.0zM1277.6 216.4h1.0v1.5h-1.0zM1284.6 216.4h1.0v1.5h-1.0zM1288.6 216.4h3.0v1.5h-3.0zM1292.6 216.4h6.0v1.5h-6.0zM1300.6 216.4h1.0v1.5h-1.0zM1272.6 218.4h8.0v1.5h-8.0zM1287.6 218.4h3.0v1.5h-3.0zM1291.6 218.4h1.0v1.5h-1.0zM1281.6 222.4h1.0v1.5h-1.0zM1288.6 222.4h1.0v1.5h-1.0zM1292.6 222.4h3.0v1.5h-3.0zM1296.6 222.4h1.0v1.5h-1.0zM1299.6 222.4h6.0v1.5h-6.0zM1307.6 222.4h1.0v1.5h-1.0zM1276.6 224.4h8.0v1.5h-8.0zM1291.6 224.4h3.0v1.5h-3.0zM1295.6 224.4h1.0v1.5h-1.0zM1298.6 224.4h1.0v1.5h-1.0zM1272.6 228.4h8.0v1.5h-8.0z"/><path fill="#d4d4d4" fill-opacity="0.5" d="M1276.6 176.4h1.0v1.5h-1.0zM1286.6 176.4h1.0v1.5h-1.0zM1294.6 176.4h1.0v1.5h-1.0zM1305.6 176.4h1.0v1.5h-1.0zM1276.6 178.4h1.0v1.5h-1.0zM1283.6 180.4h1.0v1.5h-1.0zM1295.6 180.4h1.0v1.5h-1.0zM1283.6 182.4h1.0v1.5h-1.0zM1295.6 182.4h1.0v1.5h-1.0zM1308.6 182.4h1.0v1.5h-1.0zM1284.6 184.4h1.0v1.5h-1.0zM1283.6 186.4h1.0v1.5h-1.0zM1295.6 186.4h1.0v1.5h-1.0zM1307.6 186.4h1.0v1.5h-1.0zM1279.6 216.4h1.0v1.5h-1.0zM1282.6 216.4h1.0v1.5h-1.0zM1286.6 216.4h1.0v1.5h-1.0zM1291.6 216.4h1.0v1.5h-1.0zM1298.6 216.4h1.0v1.5h-1.0zM1301.6 216.4h2.0v1.5h-2.0zM1280.6 218.4h1.0v1.5h-1.0zM1294.6 218.4h1.0v1.5h-1.0zM1283.6 222.4h1.0v1.5h-1.0zM1286.6 222.4h1.0v1.5h-1.0zM1290.6 222.4h1.0v1.5h-1.0zM1298.6 222.4h1.0v1.5h-1.0zM1305.6 222.4h1.0v1.5h-1.0zM1308.6 222.4h2.0v1.5h-2.0zM1284.6 224.4h1.0v1.5h-1.0zM1301.6 224.4h1.0v1.5h-1.0zM1280.6 228.4h1.0v1.5h-1.0z"/><path fill="#ffd700" fill-opacity="0.5" d="M1278.6 176.4h1.0v1.5h-1.0zM1314.6 176.4h1.0v1.5h-1.0zM1278.6 178.4h1.0v1.5h-1.0zM1268.6 188.4h1.0v1.5h-1.0zM1272.6 216.4h1.0v1.5h-1.0zM1303.6 216.4h1.0v1.5h-1.0zM1305.6 216.4h1.0v1.5h-1.0zM1286.6 218.4h1.0v1.5h-1.0zM1302.6 218.4h1.0v1.5h-1.0zM1295.6 222.4h1.0v1.5h-1.0zM1297.6 222.4h1.0v1.5h-1.0zM1290.6 224.4h1.0v1.5h-1.0zM1309.6 224.4h1.0v1.5h-1.0zM1286.6 228.4h1.0v1.5h-1.0zM1293.6 228.4h1.0v1.5h-1.0zM1268.6 230.4h1.0v1.5h-1.0z"/><path fill="#ce9178" fill-opacity="0.5" d="M1279.6 176.4h7.0v1.5h-7.0zM1288.6 176.4h6.0v1.5h-6.0zM1296.6 176.4h9.0v1.5h-9.0zM1307.6 176.4h7.0v1.5h-7.0zM1296.6 218.4h6.0v1.5h-6.0zM1303.6 224.4h6.0v1.5h-6.0zM1287.6 228.4h6.0v1.5h-6.0z"/><path fill="#da70d6" fill-opacity="0.5" d="M1272.6 180.4h1.0v1.5h-1.0zM1294.6 180.4h1.0v1.5h-1.0zM1272.6 182.4h1.0v1.5h-1.0zM1307.6 182.4h1.0v1.5h-1.0zM1272.6 184.4h1.0v1.5h-1.0zM1283.6 184.4h1.0v1.5h-1.0zM1272.6 186.4h1.0v1.5h-1.0zM1319.6 186.4h1.0v1.5h-1.0zM1290.6 218.4h1.0v1.5h-1.0zM1292.6 218.4h1.0v1.5h-1.0zM1276.6 222.4h1.0v1.5h-1.0zM1310.6 222.4h1.0v1.5h-1.0zM1312.6 222.4h1.0v1.5h-1.0zM1294.6 224.4h1.0v1.5h-1.0zM1296.6 224.4h1.0v1.5h-1.0zM1297.6 224.4h1.0v1.5h-1.0zM1299.6 224.4h1.0v1.5h-1.0zM1272.6 226.4h1.0v1.5h-1.0z"/><path fill="#b5cea8" fill-opacity="0.5" d="M1273.6 180.4h10.0v1.5h-10.0zM1285.6 180.4h9.0v1.5h-9.0zM1273.6 182.4h10.0v1.5h-10.0zM1285.6 182.4h10.0v1.5h-10.0zM1297.6 182.4h10.0v1.5h-10.0zM1273.6 184.4h10.0v1.5h-10.0zM1273.6 186.4h10.0v1.5h-10.0zM1285.6 186.4h10.0v1.5h-10.0zM1297.6 186.4h10.0v1.5h-10.0zM1309.6 186.4h10.0v1.5h-10.0zM1281.6 216.4h1.0v1.5h-1.0zM1285.6 222.4h1.0v1.5h-1.0z"/><path fill="#c586c0" fill-opacity="0.5" d="M1268.6 216.4h3.0v1.5h-3.0zM1272.6 222.4h3.0v1.5h-3.0z"/><path fill="#dcdcaa" fill-opacity="0.5" d="M1281.6 218.4h5.0v1.5h-5.0zM1285.6 224.4h5.0v1.5h-5.0zM1281.6 228.4h5.0v1.5h-5.0z"/></svg>

<div class="a" style="left:1349px;top:110px;width:1px;height:584px;background:#0c0c0c"></div>
<div class="a" style="left:1350px;top:110px;width:6px;height:2px;background:#a0a0a0"></div>
<div class="a" style="left:1348px;top:277px;width:1.2px;height:9px;background:#4caf50"></div>
<!-- tabs -->
<div class="a" style="left:355px;top:42px;width:1001px;height:42px;overflow:hidden">
<div style="position:absolute;left:-355px;top:-42px;width:1356px;height:714px">
<svg style="left:347.0px;top:56.5px" width="14" height="11" fill="none" stroke="#e8762c" stroke-width="1.6"><path d="M5.6 0.8L1.3 5.2 5.6 9.6M8.2 0.8L12.5 5.2 8.2 9.6"/></svg>
<div class="t" style="left:367.5px;top:56.8px;font-size:16px;color:#9d9d9d">isArray.html</div>
<div class="a" style="left:483px;top:42px;width:1px;height:41px;background:#2b2b2b"></div>
<svg style="left:499px;top:56px" width="16" height="14" fill="none"><path d="M1.2 10V1.6a0.8 0.8 0 0 1 0.8-0.8H11.5" stroke="#a074c4" stroke-width="1.3"/><rect x="3.6" y="3.4" width="10.8" height="8.8" rx="0.6" stroke="#a074c4" stroke-width="1.3"/><path d="M4.2 11.8L7.5 8.3 9.4 10 11 8.6 13.8 11.8Z" fill="#a074c4"/><circle cx="11.2" cy="6" r="1.2" fill="#a074c4"/></svg>
<div class="t" style="left:522px;top:56.8px;font-size:16px;color:#9d9d9d">if.png</div>
<div class="a" style="left:627px;top:42px;width:1px;height:41px;background:#2b2b2b"></div>
<svg style="left:644.5px;top:57.0px" width="14" height="11" fill="none" stroke="#e8762c" stroke-width="1.6"><path d="M5.6 0.8L1.3 5.2 5.6 9.6M8.2 0.8L12.5 5.2 8.2 9.6"/></svg>
<div class="t" style="left:666px;top:56.8px;font-size:16px;color:#f88070">task.html</div>
<div class="t" style="left:734px;top:56.4px;font-size:15px;color:#c8685c">3</div>
<div class="a" style="left:776px;top:42px;width:1px;height:41px;background:#2b2b2b"></div>
<svg style="left:793.5px;top:57.0px" width="14" height="11" fill="none" stroke="#e8762c" stroke-width="1.6"><path d="M5.6 0.8L1.3 5.2 5.6 9.6M8.2 0.8L12.5 5.2 8.2 9.6"/></svg>
<div class="t" style="left:815.5px;top:56.8px;font-size:16px;color:#9d9d9d">tas.html</div>
<div class="a" style="left:920px;top:42px;width:1px;height:41px;background:#2b2b2b"></div>
<svg style="left:937.5px;top:57.0px" width="14" height="11" fill="none" stroke="#e8762c" stroke-width="1.6"><path d="M5.6 0.8L1.3 5.2 5.6 9.6M8.2 0.8L12.5 5.2 8.2 9.6"/></svg>
<div class="t" style="left:959.5px;top:56.8px;font-size:16px;color:#9d9d9d">three.html</div>
<div class="a" style="left:1065px;top:42px;width:223px;height:42px;background:#1f1f1f"></div>
<div class="a" style="left:1065px;top:42px;width:223px;height:1px;background:#0078d4"></div>
<div class="a" style="left:1288px;top:42px;width:1px;height:41px;background:#2b2b2b"></div>
<svg style="left:1081.5px;top:57.0px" width="14" height="11" fill="none" stroke="#e8762c" stroke-width="1.6"><path d="M5.6 0.8L1.3 5.2 5.6 9.6M8.2 0.8L12.5 5.2 8.2 9.6"/></svg>
<div class="t" style="left:1103.5px;top:56.8px;font-size:16px;color:#ffffff">twodimensionlist.html</div>
<svg style="left:1265px;top:56px" width="14" height="14" fill="none" stroke="#ffffff" stroke-width="1.4"><path d="M1.5 1.5L12.5 12.5M12.5 1.5L1.5 12.5"/></svg>
<svg style="left:1299px;top:55px" width="18" height="16" fill="none" stroke="#cccccc" stroke-width="1.4"><rect x="0.9" y="0.9" width="15.6" height="14.2" rx="1.6"/><path d="M8.7 1V15"/></svg>
<svg style="left:1330px;top:59px" width="18" height="6"><circle cx="3" cy="3" r="1.4" fill="#cccccc"/><circle cx="9" cy="3" r="1.4" fill="#cccccc"/><circle cx="15" cy="3" r="1.4" fill="#cccccc"/></svg>
</div></div>
<!-- breadcrumbs -->
<div class="a" style="left:355px;top:84px;width:1001px;height:26px;background:#1f1f1f"></div>
<div class="t" style="left:374.5px;top:90.2px;font-size:16px;color:#a9a9a9">logic14-8</div>
<svg style="left:443px;top:90px" width="10" height="15" fill="none" stroke="#a9a9a9" stroke-width="1.3"><path d="M2.8 1.5L8.6 7.5 2.8 13.5"/></svg>
<svg style="left:463.0px;top:88.8px" width="14" height="11" fill="none" stroke="#e8762c" stroke-width="1.6"><path d="M5.6 0.8L1.3 5.2 5.6 9.6M8.2 0.8L12.5 5.2 8.2 9.6"/></svg>
<div class="t" style="left:484.5px;top:90.2px;font-size:16px;color:#a9a9a9">twodimensionlist.html</div>
<svg style="left:641px;top:90px" width="10" height="15" fill="none" stroke="#a9a9a9" stroke-width="1.3"><path d="M2.8 1.5L8.6 7.5 2.8 13.5"/></svg>
<svg style="left:655px;top:88px" width="20" height="17" fill="none" stroke="#75beff" stroke-width="1.4" stroke-linejoin="round"><path d="M1.8 5.2L10.6 1.4 17.6 5 8.6 8.9ZM1.8 5.2V11.6L8.6 15.6 17.6 11.4V5M8.6 8.9V15.6"/></svg>
<div class="t" style="left:678px;top:90.2px;font-size:16px;color:#a9a9a9">script</div>
<!-- status bar -->
<div class="a" style="left:0;top:694px;width:1356px;height:1px;background:#2b2b2b"></div>
<div class="a" style="left:0;top:695px;width:1356px;height:19px;background:#181818"></div>
<div class="a" style="left:0;top:695px;width:41px;height:19px;background:#0078d4"></div>
<!-- status content -->
<svg style="left:12px;top:696px" width="16" height="18" fill="none" stroke="#ffffff" stroke-width="1.5"><path d="M3.2 7.2L8.4 11.2 3.2 15.4M13.8 2.5L8.6 6.4 13.8 10.4"/></svg>
<svg style="left:50px;top:697px" width="18" height="17" fill="none" stroke="#cccccc" stroke-width="1.3"><circle cx="8.9" cy="8.5" r="7.1"/><path d="M6 5.6L11.8 11.4M11.8 5.6L6 11.4"/></svg>
<div class="t" style="left:70.5px;top:700.4px;font-size:14.5px;color:#cccccc;transform:scaleX(0.93);transform-origin:0 0">4</div>
<svg style="left:83px;top:697px" width="18" height="17" fill="none" stroke="#cccccc" stroke-width="1.3" stroke-linejoin="round"><path d="M8.5 1.5L15.6 14.6H1.4Z"/><path d="M8.5 6V10.5M8.5 12V13" stroke-width="1.4"/></svg>
<div class="t" style="left:103px;top:700.4px;font-size:14.5px;color:#cccccc;transform:scaleX(0.93);transform-origin:0 0">0</div>
<svg style="left:131px;top:697px" width="17" height="17" fill="none" stroke="#cccccc" stroke-width="1.2"><path d="M3.3 2.2C0.8 4.8 0.8 8.6 3.3 11.2M13.7 2.2C16.2 4.8 16.2 8.6 13.7 11.2M5.4 4.2C4 5.7 4 7.7 5.4 9.2M11.6 4.2C13 5.7 13 7.7 11.6 9.2"/><circle cx="8.5" cy="6.7" r="1.4"/><path d="M8.5 8.2L4.8 15.6M8.5 8.2L12.2 15.6M6 12.8H11"/></svg>
<div class="t" style="left:151px;top:700.4px;font-size:14.5px;color:#cccccc;transform:scaleX(0.93);transform-origin:0 0">0</div>
<div class="t" style="left:903.5px;top:700.4px;font-size:14.5px;color:#cccccc;transform:scaleX(0.93);transform-origin:0 0">Ln 1, Col 1</div>
<div class="t" style="left:989px;top:700.4px;font-size:14.5px;color:#cccccc;transform:scaleX(0.93);transform-origin:0 0">Spaces: 4</div>
<div class="t" style="left:1066.5px;top:700.4px;font-size:14.5px;color:#cccccc;transform:scaleX(0.93);transform-origin:0 0">UTF-8</div>
<div class="t" style="left:1123.5px;top:700.4px;font-size:14.5px;color:#cccccc;transform:scaleX(0.84);transform-origin:0 0">CRLF</div>
<div class="t" style="left:1168.5px;top:700.4px;font-size:14.5px;color:#cccccc;transform:scaleX(0.93);transform-origin:0 0">HTML</div>
<svg style="left:1223px;top:697px" width="17" height="16" fill="none" stroke="#cccccc" stroke-width="1.3"><circle cx="8.6" cy="8" r="6.8"/><path d="M4 12.8L13.4 3.3"/></svg>
<div class="t" style="left:1244px;top:700.4px;font-size:14.5px;color:#cccccc;transform:scaleX(0.93);transform-origin:0 0">Port : 5500</div>
<svg style="left:1331px;top:696px" width="18" height="18" fill="none" stroke="#cccccc" stroke-width="1.3"><path d="M3 14.5V8.5C3 5.2 5.2 3 8.2 3S13.4 5.2 13.4 8.5V14.5H2M1.6 14.5H15M6.6 16.5H9.8"/><circle cx="13.8" cy="3.6" r="3" fill="#cccccc" stroke="#181818" stroke-width="1.2"/></svg>
</body></html>
